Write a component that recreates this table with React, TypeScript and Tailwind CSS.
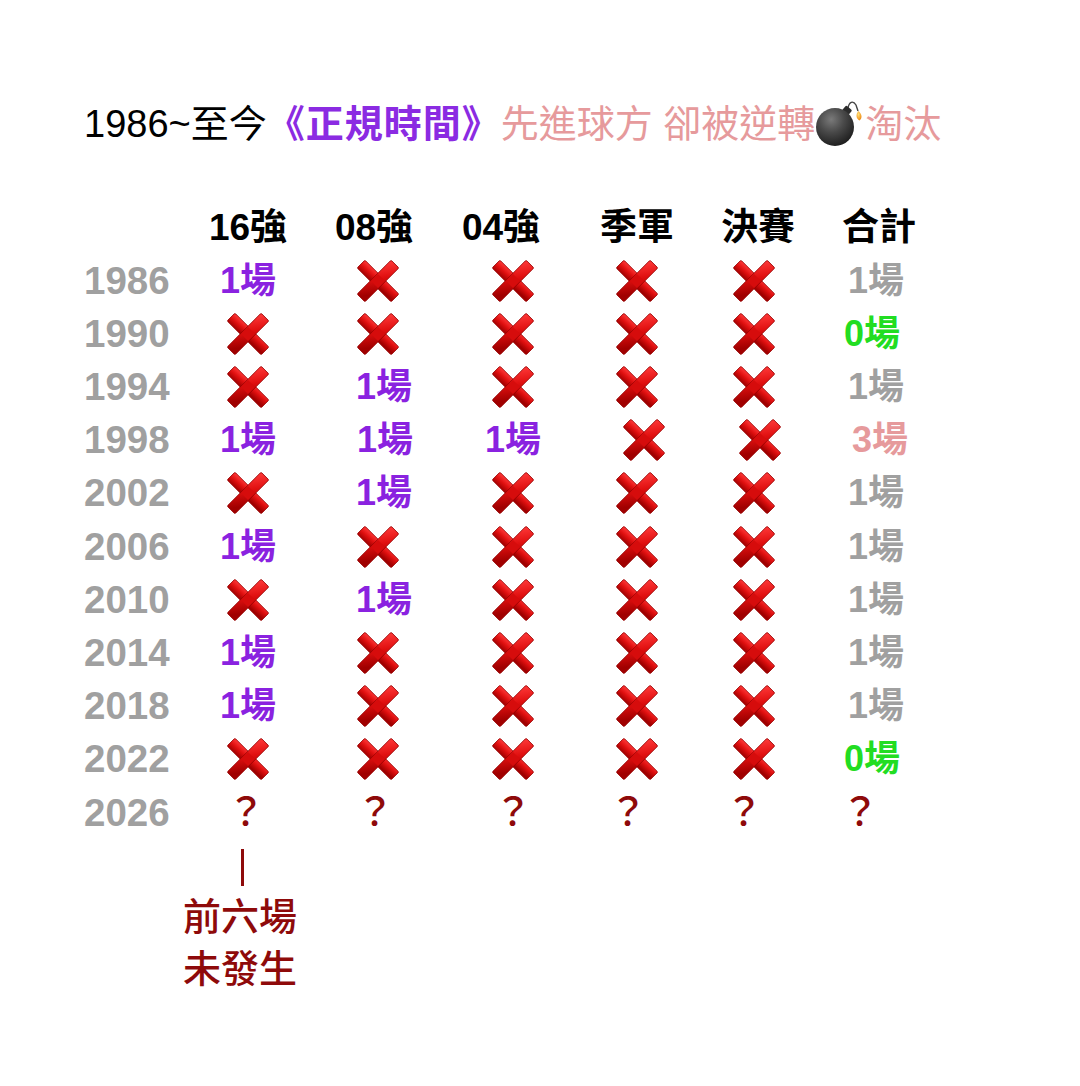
import React from "react";

type Kind = "x" | "p" | "g" | "z" | "r" | "q";
type Cell = { k: Kind; c?: string };

const FONT = { fontFamily: '"Liberation Sans", "Noto Sans CJK TC", sans-serif' };

function Cross() {
  return (
    <svg width="42" height="42" viewBox="0 0 42 42" className="block">
      <defs>
        <linearGradient id="xg" x1="0" y1="0" x2="0.3" y2="1">
          <stop offset="0" stopColor="#ff3a3a" />
          <stop offset="0.5" stopColor="#e01010" />
          <stop offset="1" stopColor="#a00000" />
        </linearGradient>
      </defs>
      <g transform="rotate(45 21 21)">
        <rect x="-3" y="15.5" width="48" height="11" rx="1.2" fill="url(#xg)" stroke="#960000" strokeWidth="0.8" />
        <rect x="15.5" y="-3" width="11" height="48" rx="1.2" fill="url(#xg)" stroke="#960000" strokeWidth="0.8" />
        <rect x="16" y="16" width="10" height="10" fill="#d60c0c" />
      </g>
    </svg>
  );
}

function Bomb() {
  return (
    <svg width="50" height="50" viewBox="0 0 50 50" className="inline-block align-[-12px]">
      <defs>
        <radialGradient id="bg" cx="0.4" cy="0.3" r="0.75">
          <stop offset="0" stopColor="#7a7a7a" />
          <stop offset="0.45" stopColor="#4a4a4a" />
          <stop offset="1" stopColor="#1a1a1a" />
        </radialGradient>
        <radialGradient id="sp" cx="0.4" cy="0.35" r="0.65">
          <stop offset="0" stopColor="#ffe27a" />
          <stop offset="1" stopColor="#ee8a12" />
        </radialGradient>
      </defs>
      <path d="M33 9 C 34 3, 38 1, 41 6 L 43 12" stroke="#444" strokeWidth="1.4" fill="none" />
      <rect x="28" y="8" width="8" height="7" rx="1.5" transform="rotate(40 32 11.5)" fill="#2c2c2c" />
      <circle cx="20" cy="28" r="19" fill="url(#bg)" />
      <path d="M43.5 12 C 47 15, 47.5 19, 44.5 21.5 C 41 20, 40.5 15, 43.5 12 Z" fill="url(#sp)" />
    </svg>
  );
}

function CellView({ cell }: { cell: Cell }) {
  let inner: React.ReactNode = null;
  switch (cell.k) {
    case "x":
      inner = <Cross />;
      break;
    case "p":
      inner = <span className="text-[36px] font-bold text-[#8a22e0] leading-none">1場</span>;
      break;
    case "g":
      inner = <span className="text-[36px] font-bold text-[#a0a0a0] leading-none">1場</span>;
      break;
    case "z":
      inner = <span className="text-[36px] font-bold text-[#22dd22] leading-none">0場</span>;
      break;
    case "r":
      inner = <span className="text-[36px] font-bold text-[#e69a9c] leading-none">3場</span>;
      break;
    case "q":
      inner = <span className="text-[38px] font-medium text-[#8e0a0a] leading-none">？</span>;
      break;
  }
  return <div className={`flex h-[53.2px] items-center justify-center ${cell.c ?? ""}`}>{inner}</div>;
}

const X: Cell = { k: "x" };
const P: Cell = { k: "p" };
const P2: Cell = { k: "p", c: "pl-[12px]" };
const G: Cell = { k: "g" };
const Z: Cell = { k: "z", c: "pr-[8px]" };

const rows: { year: string; cells: Cell[] }[] = [
  { year: "1986", cells: [P, X, X, X, X, G] },
  { year: "1990", cells: [X, X, X, X, X, Z] },
  { year: "1994", cells: [X, P2, X, X, X, G] },
  {
    year: "1998",
    cells: [P, { k: "p", c: "pl-[14px]" }, P, { k: "x", c: "pl-[14px]" }, { k: "x", c: "pl-[12px]" }, { k: "r", c: "pl-[8px]" }],
  },
  { year: "2002", cells: [X, P2, X, X, X, G] },
  { year: "2006", cells: [P, X, X, X, X, G] },
  { year: "2010", cells: [X, P2, X, X, X, G] },
  { year: "2014", cells: [P, X, X, X, X, G] },
  { year: "2018", cells: [P, X, X, X, X, G] },
  { year: "2022", cells: [X, X, X, X, X, Z] },
  {
    year: "2026",
    cells: [
      { k: "q", c: "pr-[4px]" },
      { k: "q", c: "pr-[6px]" },
      { k: "q" },
      { k: "q", c: "pr-[18px]" },
      { k: "q", c: "pr-[20px]" },
      { k: "q", c: "pr-[32px]" },
    ],
  },
];

const headers: { t: string; c: string }[] = [
  { t: "16強", c: "" },
  { t: "08強", c: "pr-[8px]" },
  { t: "04強", c: "pr-[24px]" },
  { t: "季軍", c: "" },
  { t: "決賽", c: "pl-[8px]" },
  { t: "合計", c: "pl-[6px]" },
];

export default function App() {
  return (
    <div className="min-h-screen w-full bg-white pl-[84px] pt-[99px]" style={FONT}>
      <div className="h-[46px] whitespace-nowrap text-[38px] leading-[46px] text-black">
        <span>1986~至今</span>
        <span className="font-bold tracking-[1px] text-[#8b2be2]">《正規時間》</span>
        <span className="text-[#e69a9c]">先進球方 卻被逆轉</span>
        <Bomb />
        <span className="text-[#e69a9c]">淘汰</span>
      </div>

      <div className="mt-[57px] grid grid-cols-[99px_130px_130px_140px_108px_126px_118px]">
        <div className="h-[52px]" />
        {headers.map((h) => (
          <div key={h.t} className={`flex h-[52px] items-center justify-center text-[37px] font-bold text-black ${h.c}`}>
            {h.t}
          </div>
        ))}
        {rows.map((r) => (
          <React.Fragment key={r.year}>
            <div className="flex h-[53.2px] items-center text-[38.5px] font-bold text-[#a0a0a0]">{r.year}</div>
            {r.cells.map((cell, i) => (
              <CellView key={i} cell={cell} />
            ))}
          </React.Fragment>
        ))}
      </div>

      <div className="ml-[99px] flex w-[114px] flex-col items-center pt-[10px] text-[#8e0a0a]">
        <div className="ml-[4px] h-[37px] w-[3px] bg-[#8e0a0a]" />
        <div className="mt-[5px] text-[38px] font-medium leading-[52px]">前六場</div>
        <div className="text-[38px] font-medium leading-[52px]">未發生</div>
      </div>
    </div>
  );
}
